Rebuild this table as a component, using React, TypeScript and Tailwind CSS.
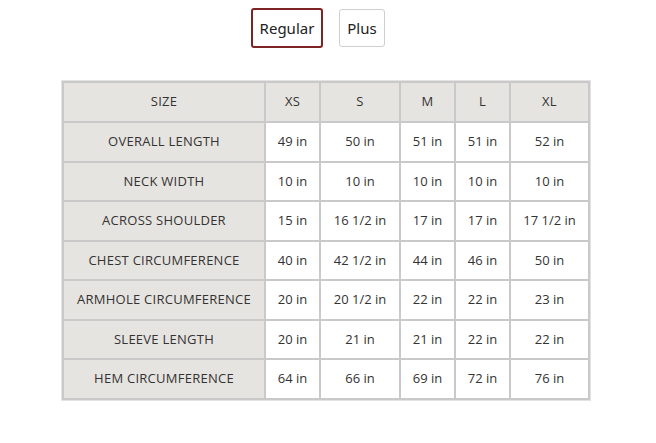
import { FunctionComponent } from 'react';

const sizes = ['XS', 'S', 'M', 'L', 'XL'];

const rows: [string, string[]][] = [
    ['OVERALL LENGTH', ['49 in', '50 in', '51 in', '51 in', '52 in']],
    ['NECK WIDTH', ['10 in', '10 in', '10 in', '10 in', '10 in']],
    ['ACROSS SHOULDER', ['15 in', '16 1/2 in', '17 in', '17 in', '17 1/2 in']],
    ['CHEST CIRCUMFERENCE', ['40 in', '42 1/2 in', '44 in', '46 in', '50 in']],
    ['ARMHOLE CIRCUMFERENCE', ['20 in', '20 1/2 in', '22 in', '22 in', '23 in']],
    ['SLEEVE LENGTH', ['20 in', '21 in', '21 in', '22 in', '22 in']],
    ['HEM CIRCUMFERENCE', ['64 in', '66 in', '69 in', '72 in', '76 in']],
];

const App: FunctionComponent = () => {
    return (
        <div className="w-[656px] h-[443px] bg-white font-['Open_Sans',sans-serif] text-[#333]">
            <div className="flex justify-center gap-4 pt-2 pr-5">
                <button className="h-10 w-[72px] border-2 border-[#7d2424] rounded-[3px] text-[15px] text-[#222] font-['Noto_Sans',sans-serif]">
                    Regular
                </button>
                <button className="h-[38px] w-[46px] mt-[1px] border border-[#cfcfcf] rounded-[3px] text-[15px] text-[#222] font-['Noto_Sans',sans-serif]">
                    Plus
                </button>
            </div>
            <div className="ml-[61px] mt-[32px] w-fit border border-[#e3e3e3]">
                <table className="table-fixed border-collapse text-[13px]">
                    <colgroup>
                        <col className="w-[202px]" />
                        <col className="w-[55px]" />
                        <col className="w-[80px]" />
                        <col className="w-[55px]" />
                        <col className="w-[55px]" />
                        <col className="w-[79px]" />
                    </colgroup>
                    <thead>
                        <tr className="h-[40px]">
                            <th className="border-2 border-[#c9c9c9] bg-[#e6e4e0] font-normal tracking-[0.02em]">SIZE</th>
                            {sizes.map((s) => (
                                <th key={s} className="border-2 border-[#c9c9c9] bg-[#e6e4e0] font-normal tracking-[0.02em]">
                                    {s}
                                </th>
                            ))}
                        </tr>
                    </thead>
                    <tbody>
                        {rows.map(([label, vals]) => (
                            <tr key={label} className="h-[39.5px]">
                                <td className="border-2 border-[#c9c9c9] bg-[#e6e4e0] text-center tracking-[0.02em]">{label}</td>
                                {vals.map((v, i) => (
                                    <td key={i} className="border-2 border-[#c9c9c9] bg-white text-center">
                                        {v}
                                    </td>
                                ))}
                            </tr>
                        ))}
                    </tbody>
                </table>
            </div>
        </div>
    );
};

export default App;
